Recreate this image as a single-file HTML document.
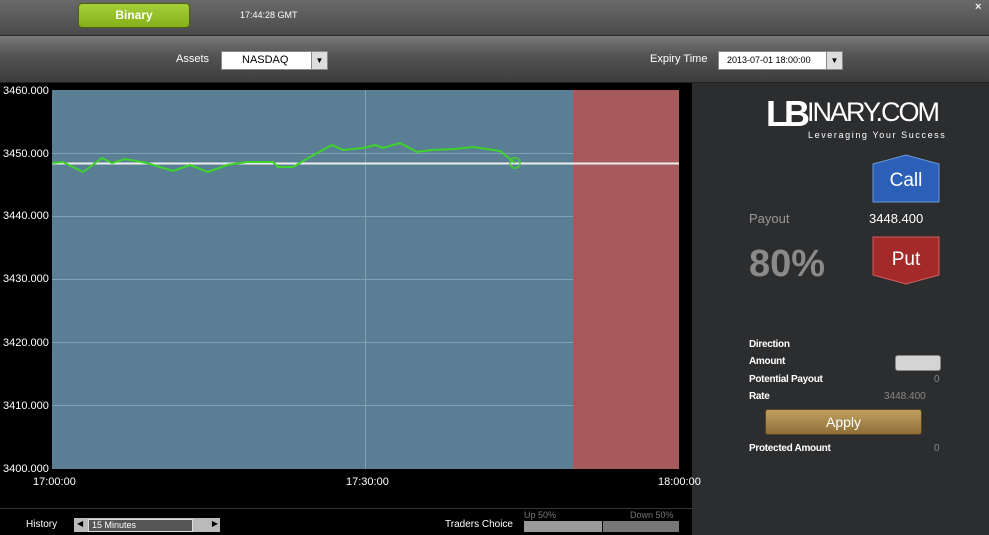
<!DOCTYPE html><html><head><style>
body{margin:0;width:989px;height:535px;overflow:hidden;background:#2c2d2f;font-family:"Liberation Sans",sans-serif;position:relative}
.a{position:absolute}
.t{color:#fff;font-size:11px}
.r{color:#fff;font-size:10px;font-weight:bold;letter-spacing:-0.3px}
</style></head><body>
<div class="a" style="left:0;top:0;width:989px;height:35px;background:linear-gradient(#6a6a6a,#4a4a4a);border-bottom:1px solid #2a2a2a"></div>
<div class="a" style="left:78px;top:3px;width:110px;height:23px;border-radius:4px;background:linear-gradient(#a6cf3a,#84b01a);border:1px solid #4c6010;color:#fff;font-weight:bold;font-size:12px;text-align:center;line-height:23px">Binary</div>
<div class="a t" style="left:240px;top:10px;font-size:9px">17:44:28 GMT</div>
<div class="a" style="left:975px;top:1px;color:#eee;font-size:11px;font-weight:bold">×</div>
<div class="a" style="left:0;top:36px;width:989px;height:46px;background:linear-gradient(#7a7a7a,#555 40%,#3c3c3c);border-bottom:1px solid #222"></div>
<div class="a t" style="left:176px;top:53px">Assets</div>
<div class="a" style="left:221px;top:51px;width:105px;height:17px;background:#fff;border:1px solid #888"><span style="position:absolute;left:20px;top:2px;font-size:11px">NASDAQ</span><span style="position:absolute;right:0;top:0;width:15px;height:17px;background:#ddd;border-left:1px solid #888;font-size:8px;text-align:center;line-height:17px">▼</span></div>
<div class="a t" style="left:650px;top:53px">Expiry Time</div>
<div class="a" style="left:718px;top:51px;width:123px;height:17px;background:#fff;border:1px solid #888"><span style="position:absolute;left:8px;top:3px;font-size:9px">2013-07-01 18:00:00</span><span style="position:absolute;right:0;top:0;width:15px;height:17px;background:#ddd;border-left:1px solid #888;font-size:8px;text-align:center;line-height:17px">▼</span></div>
<div class="a" style="left:0;top:83px;width:692px;height:452px;background:#000"></div>
<svg class="a" style="left:0;top:0" width="692" height="535">
<rect x="52" y="90" width="521" height="379" fill="#5a7f94"/>
<rect x="573" y="90" width="106" height="379" fill="#a65a5c"/>
<g stroke="#7fa2b5" stroke-width="1"><line x1="52" x2="573" y1="153.5" y2="153.5"/><line x1="52" x2="573" y1="216.5" y2="216.5"/><line x1="52" x2="573" y1="279.5" y2="279.5"/><line x1="52" x2="573" y1="342.5" y2="342.5"/><line x1="52" x2="573" y1="405.5" y2="405.5"/><line x1="365.5" x2="365.5" y1="90" y2="469"/></g>
<line x1="52" x2="679" y1="163.5" y2="163.5" stroke="#eee" stroke-width="2"/>
<polyline fill="none" stroke="#3ed22a" stroke-width="2" points="52,163 63,162 83,172 102,158 112,163 125,159 147,163 173,171 190,165 208,172 227,165 247,162 273,162 278,167 293,167 310,157 332,145 343,150 363,148 375,145 383,148 400,143 417,152 432,150 455,149 473,147 500,151 515,163"/>
<circle cx="515" cy="163" r="5" fill="none" stroke="#3ed22a" stroke-width="2" opacity=".8"/>
<line x1="0" x2="692" y1="508.5" y2="508.5" stroke="#333"/>
</svg>
<div class="a t" style="left:3px;top:85px">3460.000</div>
<div class="a t" style="left:3px;top:148px">3450.000</div>
<div class="a t" style="left:3px;top:210px">3440.000</div>
<div class="a t" style="left:3px;top:273px">3430.000</div>
<div class="a t" style="left:3px;top:337px">3420.000</div>
<div class="a t" style="left:3px;top:400px">3410.000</div>
<div class="a t" style="left:3px;top:463px">3400.000</div>
<div class="a t" style="left:33px;top:476px">17:00:00</div>
<div class="a t" style="left:346px;top:476px">17:30:00</div>
<div class="a t" style="left:658px;top:476px">18:00:00</div>
<div class="a t" style="left:26px;top:519px;font-size:10px">History</div>
<div class="a" style="left:74px;top:518px;width:146px;height:14px;background:#bbb"><span style="position:absolute;left:14px;top:1px;width:100px;height:11px;background:#555;border:1px solid #ddd;color:#fff;font-size:9px;padding-left:3px;line-height:11px">15 Minutes</span><span style="position:absolute;left:3px;top:1px;font-size:8px">◀</span><span style="position:absolute;right:2px;top:1px;font-size:8px">▶</span></div>
<div class="a t" style="left:445px;top:519px;font-size:10px">Traders Choice</div>
<div class="a" style="left:524px;top:510px;color:#777;font-size:9px">Up 50%</div>
<div class="a" style="left:630px;top:510px;color:#777;font-size:9px">Down 50%</div>
<div class="a" style="left:524px;top:521px;width:78px;height:11px;background:#999"></div>
<div class="a" style="left:603px;top:521px;width:76px;height:11px;background:#777"></div>
<div class="a" style="left:766px;top:94px;color:#fff;font-size:36px;font-weight:bold;line-height:40px;letter-spacing:-4px">LB</div>
<div class="a" style="left:807px;top:97px;color:#fff;font-size:27px;line-height:30px;letter-spacing:-2px">INARY.COM</div>
<div class="a" style="left:808px;top:130px;color:#fff;font-size:9px;letter-spacing:1.6px">Leveraging Your Success</div>
<svg class="a" style="left:872px;top:154px" width="70" height="132">
<path d="M1,10 L34,1 L67,10 L67,48 L1,48Z" fill="#2b5fb8" stroke="#6a9ad8"/>
<path d="M1,83 L67,83 L67,121 L34,130 L1,121Z" fill="#a42a2a" stroke="#d06060"/>
</svg>
<div class="a" style="left:872px;top:170px;width:68px;text-align:center;color:#fff;font-size:19px">Call</div>
<div class="a" style="left:872px;top:249px;width:68px;text-align:center;color:#fff;font-size:19px">Put</div>
<div class="a" style="left:749px;top:211px;color:#999;font-size:13px">Payout</div>
<div class="a" style="left:869px;top:211px;color:#fff;font-size:13px">3448.400</div>
<div class="a" style="left:749px;top:243px;color:#8a8a8a;font-size:38px;font-weight:bold">80%</div>
<div class="a r" style="left:749px;top:339px">Direction</div>
<div class="a r" style="left:749px;top:356px">Amount</div>
<div class="a" style="left:895px;top:355px;width:44px;height:14px;border-radius:3px;background:#d4d4d4;border:1px solid #888"></div>
<div class="a r" style="left:749px;top:374px">Potential Payout</div>
<div class="a" style="left:934px;top:374px;color:#888;font-size:10px">0</div>
<div class="a r" style="left:749px;top:391px">Rate</div>
<div class="a" style="left:884px;top:391px;color:#888;font-size:10px">3448.400</div>
<div class="a" style="left:765px;top:409px;width:155px;height:24px;border-radius:3px;background:linear-gradient(#c0a060,#8f6f38);border:1px solid #5a4420;color:#fff;font-size:14px;text-align:center;line-height:24px">Apply</div>
<div class="a r" style="left:749px;top:443px">Protected Amount</div>
<div class="a" style="left:934px;top:443px;color:#888;font-size:10px">0</div>
</body></html>
